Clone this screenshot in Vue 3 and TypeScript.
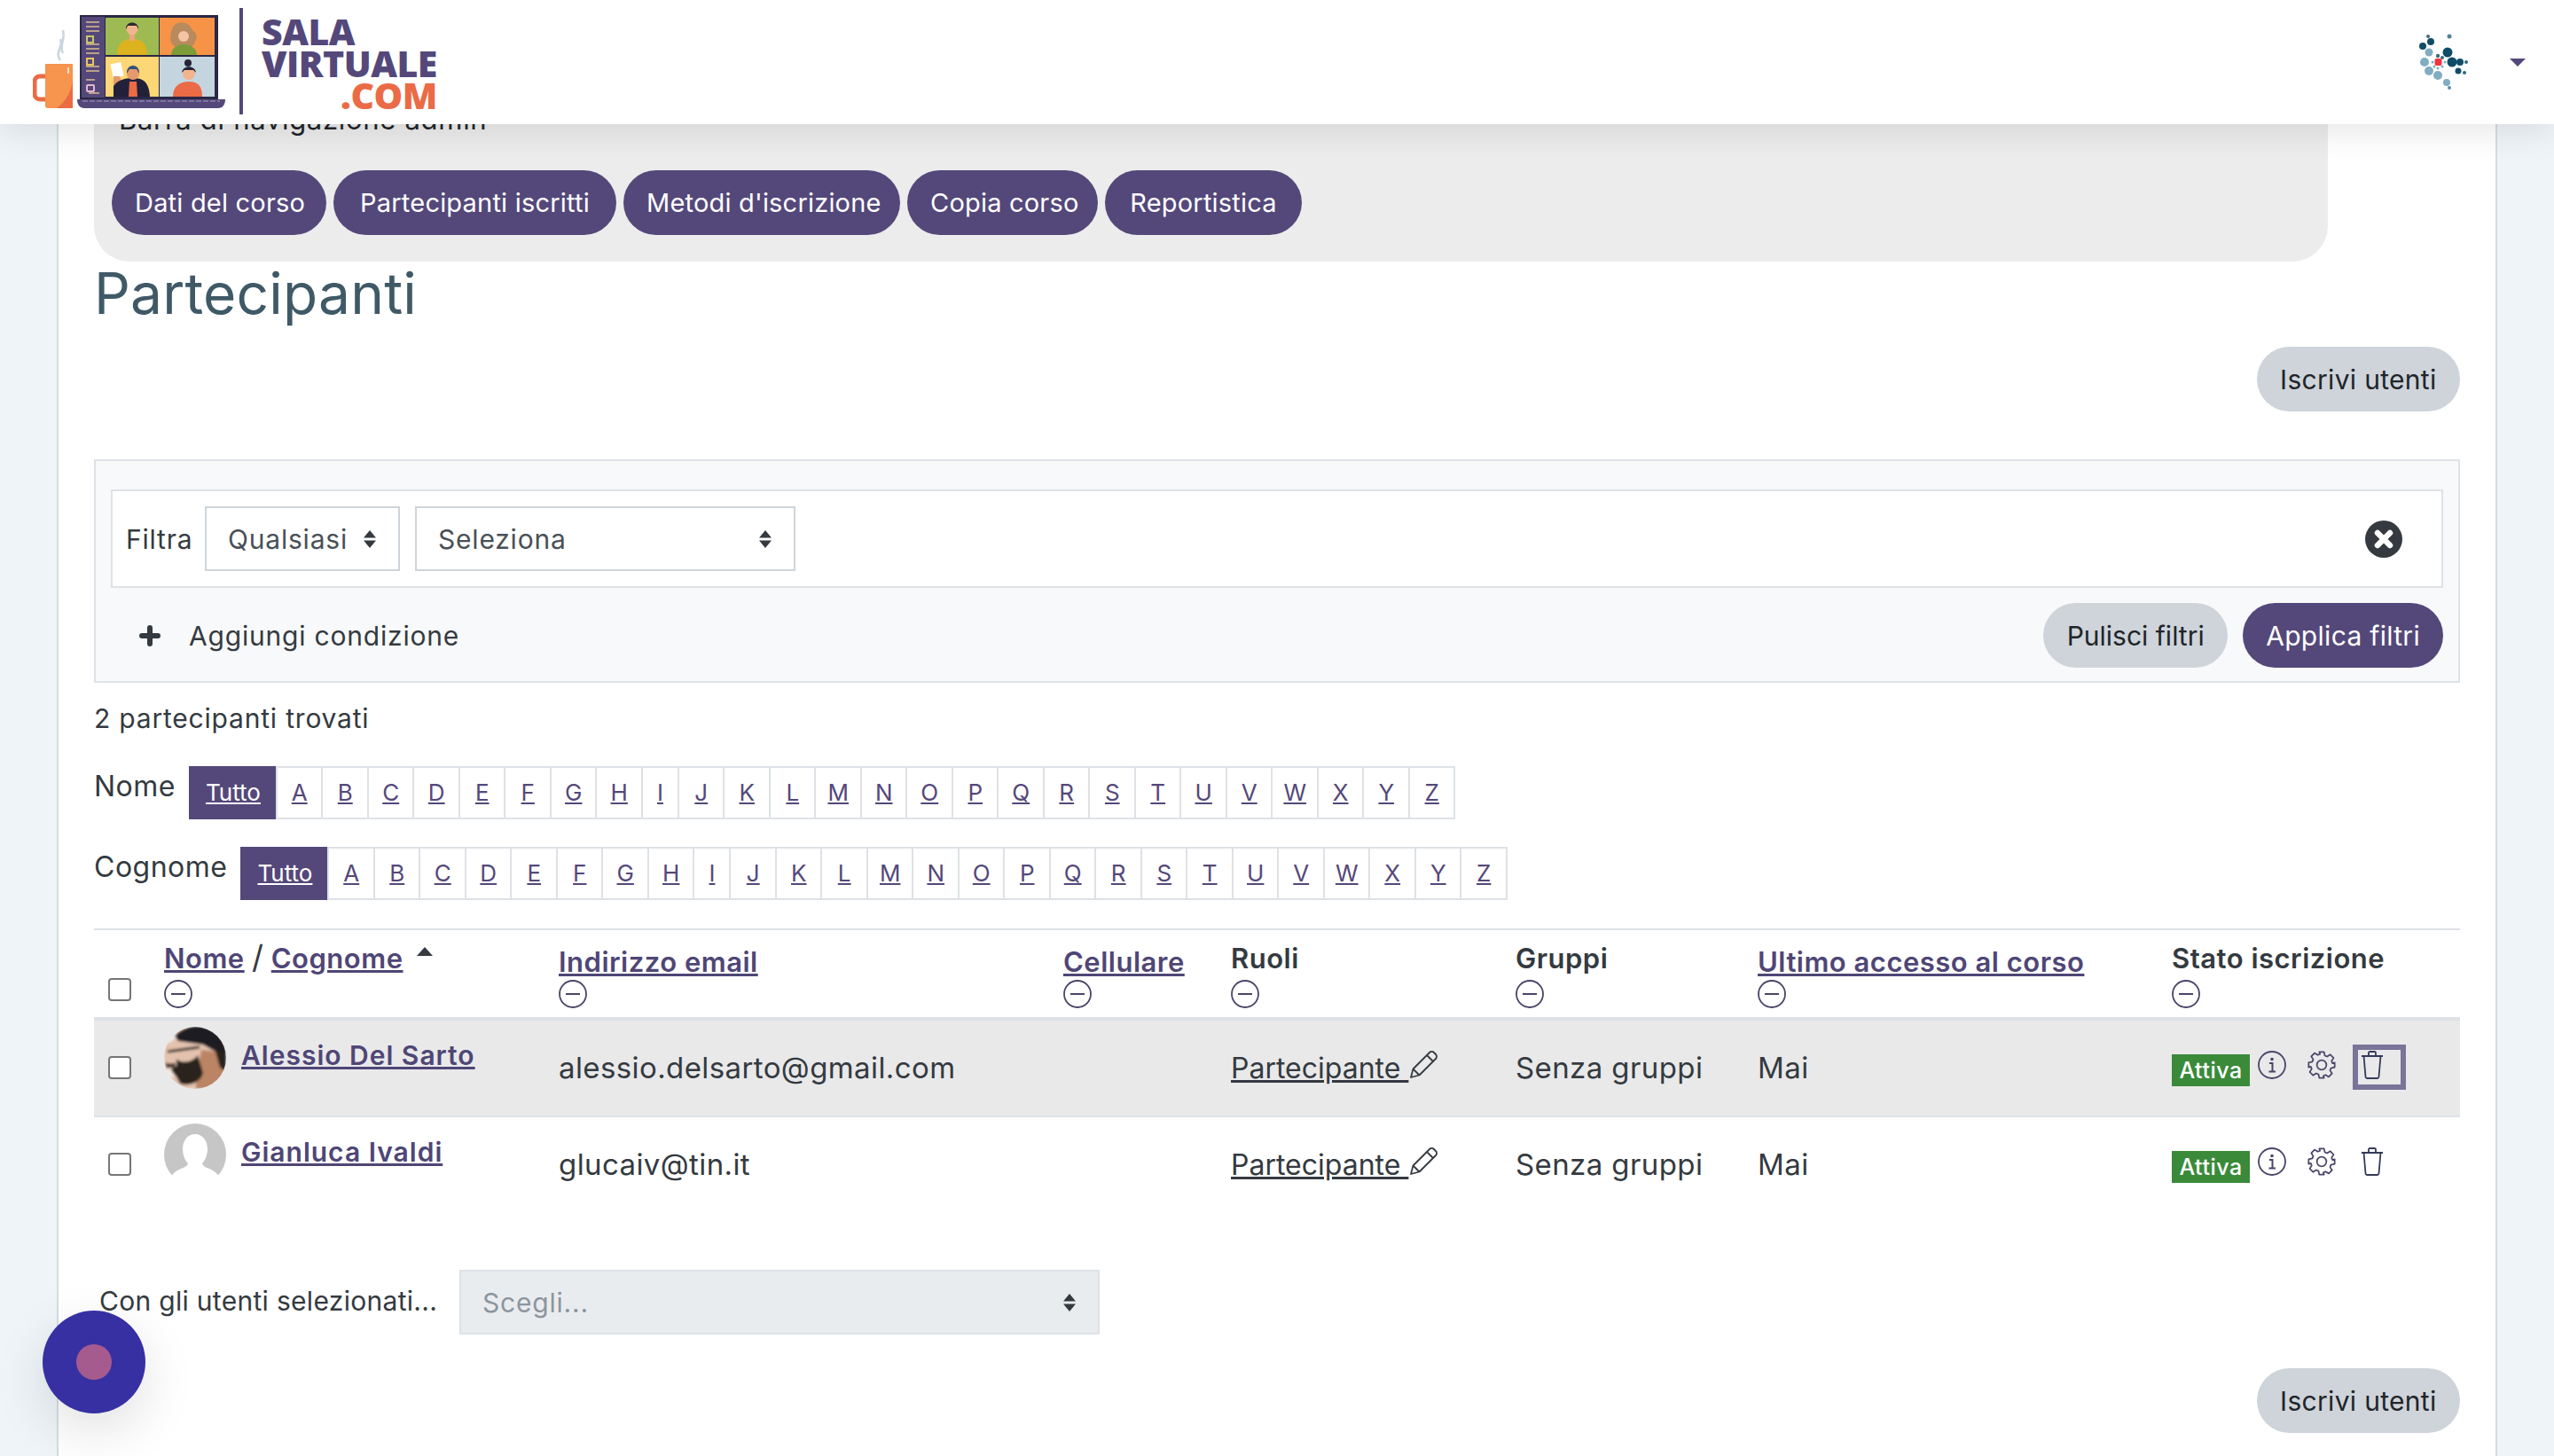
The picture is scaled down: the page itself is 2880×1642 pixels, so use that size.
<template>
  <div class="page">
    <header class="topbar">
      <div class="logo">
        <svg class="logo-art" width="225" height="122" viewBox="37 9 225 122">
          <!-- tazza -->
          <path d="M68 68c-7-9 4-15 0-24M71 60c-5-8 3-15 0-26" fill="none" stroke="#c9d6dd" stroke-width="2.500" />
          <rect x="39" y="86" width="18" height="26" rx="6" fill="none" stroke="#ea6b45" stroke-width="5" />
          <path d="M51 72h31v50H54a3 3 0 0 1-3-3z" fill="#f7944d" />
          <path d="M64 122c11-8 18-20 18-36v36z" fill="#ea6b45" />
          <rect x="76" y="76" width="2" height="7" fill="#fde2c4" />
          <!-- portatile -->
          <rect x="90" y="17" width="156" height="95" fill="#2a2745" />
          <rect x="92" y="19" width="26" height="91" fill="#54487a" />
          <path d="M97 25h15M97 30h15M97 35h15M97 50h15M97 55h15M97 60h15M97 75h15M97 80h15M97 90h10M100 105h12" stroke="#b9a08a" stroke-width="2" />
          <rect x="98" y="41" width="7" height="7" fill="none" stroke="#c8c66a" stroke-width="2" />
          <rect x="98" y="66" width="7" height="7" fill="none" stroke="#e8c65c" stroke-width="2" />
          <rect x="98" y="96" width="8" height="7" rx="1" fill="none" stroke="#e4b6d0" stroke-width="2" />
          <rect x="119" y="20" width="60" height="42" fill="#9dbb52" />
          <rect x="180" y="20" width="62" height="42" fill="#f79347" />
          <rect x="119" y="64" width="60" height="45" fill="#fdd675" />
          <rect x="180" y="64" width="62" height="45" fill="#c4d5e0" />
          <path d="M132 62c0-13 6-18 17-18s17 5 17 18z" fill="#dcb21e" />
          <rect x="146" y="38" width="6" height="8" fill="#eea57e" />
          <circle cx="149" cy="33" r="6.500" fill="#f2b48c" />
          <path d="M142 33c-1-10 15-10 14 0l-2-4h-10z" fill="#2e2a30" />
          <path d="M193 36c2-14 20-14 24-2 4 3 7 8 3 12-1 6-5 8-8 7h-12c-5 0-10-6-7-17z" fill="#b88a5e" />
          <path d="M193 62c0-8 7-12 14-12s15 4 15 12z" fill="#7c9c3a" />
          <circle cx="207" cy="41" r="6" fill="#f6c4a4" />
          <rect x="126" y="71" width="12" height="16" fill="#fff" transform="rotate(-12 132 79)" />
          <path d="M128 86h7l3 10h-10z" fill="#e59a6b" />
          <path d="M128 109v-12c4-6 12-9 22-9s18 3 19 21z" fill="#23213a" />
          <path d="M146 92h8l1 17h-10z" fill="#ea6b45" />
          <circle cx="150" cy="83" r="7" fill="#e59a6b" />
          <path d="M143 83c-1-12 15-12 14 0l-3-5h-8z" fill="#35507a" />
          <path d="M195 109c0-12 8-17 18-17s15 5 15 17z" fill="#ea6b45" />
          <circle cx="213" cy="83" r="7" fill="#f2b48c" />
          <circle cx="212" cy="71" r="4" fill="#262338" />
          <path d="M205 82c1-9 15-9 16 0l-3-3h-10z" fill="#262338" />
          <path d="M87 112h167c0 6-3 10-8 10H95c-5 0-8-4-8-10z" fill="#54487a" />
          <path d="M93 114h155" stroke="#8a80a8" stroke-width="1.500" stroke-dasharray="6 2" />
        </svg>
        <div class="logo-divider"></div>
        <div class="logo-text">
          <span class="logo-sala">SALA</span>
          <span class="logo-virtuale">VIRTUALE</span>
          <span class="logo-com">.COM</span>
        </div>
      </div>
      <div class="user-menu">
        <svg width="62" height="68" viewBox="2725 38 62 68">
          <g fill="#0f4c68">
            <circle cx="2738" cy="43" r="2" fill="#3f6a80" /><circle cx="2762" cy="43" r="2.500" fill="#557f93" />
            <circle cx="2741" cy="49" r="4" /><circle cx="2732" cy="54" r="4" /><circle cx="2760" cy="61" r="5.500" />
            <circle cx="2765" cy="72" r="5.500" /><circle cx="2774" cy="72" r="4" /><circle cx="2781" cy="72" r="2" fill="#2b6a80" />
            <circle cx="2772" cy="82" r="3.500" /><circle cx="2779" cy="84" r="2" fill="#2b6a80" />
            <circle cx="2749" cy="65" r="2.200" fill="#3f6a80" /><circle cx="2754" cy="67" r="2" fill="#3f6a80" />
          </g>
          <g fill="#81adc2">
            <circle cx="2739" cy="61" r="4.500" /><circle cx="2734" cy="72" r="5" /><circle cx="2739" cy="82" r="5" />
            <circle cx="2749" cy="87" r="5" /><circle cx="2759" cy="95" r="4" /><circle cx="2762" cy="101" r="2" fill="#5f8ea3" />
            <circle cx="2743" cy="72" r="1.500" /><circle cx="2745" cy="77" r="1.500" /><circle cx="2749" cy="79" r="1.500" /><circle cx="2754" cy="77" r="1.500" /><circle cx="2757" cy="72" r="1.500" />
          </g>
          <rect x="2745.500" y="68" width="8" height="8" rx="2" fill="#f0343f" />
        </svg>
        <span class="caret"></span>
      </div>
    </header>

    <main class="card">
      <section class="secondary-nav">
        <div class="nav-title">Barra di navigazione admin</div>
        <div class="nav-buttons">
          <button
            v-for="item in navItems"
            :key="item.label"
            class="btn btn-primary"
            :style="{ width: item.width + 'px' }"
          >{{ item.label }}</button>
        </div>
      </section>

      <h2 class="page-title">Partecipanti</h2>

      <div class="enrol-row">
        <button class="btn btn-secondary">Iscrivi utenti</button>
      </div>

      <section class="filters">
        <div class="filter-line">
          <span class="filter-label">Filtra</span>
          <div class="fake-select sel-any">Qualsiasi <SelectArrows /></div>
          <div class="fake-select sel-field">Seleziona <SelectArrows /></div>
          <svg class="filter-remove" width="42" height="42" viewBox="0 0 42 42">
            <circle cx="21" cy="21" r="21" fill="#343a40" />
            <path d="M14 14l14 14M28 14L14 28" stroke="#fff" stroke-width="6.500" stroke-linecap="round" />
          </svg>
        </div>
        <div class="filter-actions">
          <svg class="plus" width="24" height="24" viewBox="0 0 24 24">
            <path d="M12 3v18M3 12h18" stroke="#343a40" stroke-width="6" stroke-linecap="round" />
          </svg>
          <span class="add-cond">Aggiungi condizione</span>
          <button class="btn btn-secondary btn-clear">Pulisci filtri</button>
          <button class="btn btn-primary btn-apply">Applica filtri</button>
        </div>
      </section>

      <div class="found">2 partecipanti trovati</div>

      <div v-for="bar in letterBars" :key="bar" class="initials">
        <span class="initials-label">{{ bar }}</span>
        <div class="pagination">
          <a class="page-cell active">Tutto</a>
          <a v-for="l in letters" :key="l" class="page-cell" :class="{ narrow: l === 'I' }">{{ l }}</a>
        </div>
      </div>

      <table class="participants">
        <thead>
          <tr>
            <th class="col-check"><span class="checkbox head-check"></span></th>
            <th class="col-name">
              <a class="sort">Nome</a> <span class="slash">/</span> <a class="sort">Cognome</a>
              <span class="sort-arrow"></span>
              <MinusIcon />
            </th>
            <th class="col-mail"><a class="sort low">Indirizzo email</a><MinusIcon /></th>
            <th class="col-phone"><a class="sort low">Cellulare</a><MinusIcon /></th>
            <th class="col-role"><span class="plain">Ruoli</span><MinusIcon /></th>
            <th class="col-group"><span class="plain">Gruppi</span><MinusIcon /></th>
            <th class="col-last"><a class="sort low">Ultimo accesso al corso</a><MinusIcon /></th>
            <th class="col-state"><span class="plain">Stato iscrizione</span><MinusIcon /></th>
          </tr>
        </thead>
        <tbody>
          <tr v-for="(u, i) in users" :key="u.email" :class="{ hovered: i === 0 }">
            <td class="col-check"><span class="checkbox"></span></td>
            <td class="col-name">
              <div class="user-cell">
                <svg v-if="i === 0" class="avatar" width="70" height="70" viewBox="0 0 70 70">
                  <defs>
                    <clipPath id="av1"><circle cx="35" cy="35" r="35" /></clipPath>
                    <filter id="blur1"><feGaussianBlur stdDeviation="1.400" /></filter>
                  </defs>
                  <g clip-path="url(#av1)" filter="url(#blur1)">
                    <rect width="70" height="70" fill="#e3c2ad" />
                    <path d="M0 0h14v12L6 18H0z" fill="#eee" />
                    <path d="M36 60l6-34 16 2 12 20v22H36z" fill="#bb8465" />
                    <path d="M12 10C26-6 62-6 70 24v24l-8-6-4-14-14-8-28-4z" fill="#1f1d24" />
                    <path d="M58 26l12 4v20l-7-4z" fill="#26211f" />
                    <path d="M14 36c6 6 18 4 24-4l6 20c-2 10-16 16-26 12-4-8-6-12-12-15l8-5z" fill="#2c211c" />
                    <path d="M4 28l14-2 22-3" fill="none" stroke="#262223" stroke-width="3" />
                    <path d="M2 40c3 2 8 2 11 0l-1 6H2z" fill="#3a2a26" />
                    <path d="M0 48h8l4 10-8-3z" fill="#f3ece6" />
                  </g>
                </svg>
                <svg v-else class="avatar" width="70" height="70" viewBox="0 0 70 70">
                  <circle cx="35" cy="35" r="35" fill="#c6c6c6" />
                  <path d="M35 12c9 0 14 8 14 17 0 7-3 13-6 16 1 3 3 4 8 6 5 2 9 5 11 9a35 35 0 0 1-54 0c2-4 6-7 11-9 5-2 7-3 8-6-3-3-6-9-6-16 0-9 5-17 14-17z" fill="#fff" />
                </svg>
                <a class="user-name">{{ u.name }}</a>
              </div>
            </td>
            <td class="col-mail cell-mid">{{ u.email }}</td>
            <td class="col-phone cell-mid"></td>
            <td class="col-role cell-mid">
              <a class="role-link">Partecipante </a><svg class="pencil" width="32" height="32" viewBox="0 0 32 32">
                <path d="M2 30l2.500-9.500L23 2a3.500 3.500 0 0 1 5 0l2 2a3.500 3.500 0 0 1 0 5L11.500 27.500zM4.500 20.500l7 7M20 5l7 7" fill="none" stroke="#343a40" stroke-width="1.800" stroke-linejoin="round" />
              </svg>
            </td>
            <td class="col-group cell-mid">Senza gruppi</td>
            <td class="col-last cell-mid">Mai</td>
            <td class="col-state">
              <div class="state-cell">
                <span class="badge">Attiva</span>
                <svg class="state-icon" width="32" height="32" viewBox="0 0 32 32">
                  <circle cx="16" cy="16" r="15" fill="none" stroke="#4a4468" stroke-width="1.800" />
                  <circle cx="16" cy="9.500" r="1.800" fill="#4a4468" />
                  <path d="M13 14h3.500v9M12.500 23.500h7.500" fill="none" stroke="#4a4468" stroke-width="2" />
                </svg>
                <svg class="state-icon gear" width="32" height="32" viewBox="0 0 24 24">
                  <path d="M10 1h4l.7 3.100 1.900.8 2.700-1.700 2.800 2.800-1.700 2.700.8 1.900L23 10v4l-3.100.7-.8 1.900 1.700 2.700-2.800 2.800-2.700-1.700-1.900.8L14 23h-4l-.7-3.100-1.900-.8-2.700 1.700-2.800-2.800 1.700-2.700-.8-1.900L1 14v-4l3.100-.7.8-1.900-1.700-2.700 2.800-2.800 2.700 1.700 1.900-.8z" fill="none" stroke="#4a4468" stroke-width="1.300" stroke-linejoin="round" />
                  <circle cx="12" cy="12" r="4" fill="none" stroke="#4a4468" stroke-width="1.300" />
                </svg>
                <span class="trash-wrap" :class="{ focused: i === 0 }">
                  <svg width="26" height="32" viewBox="0 0 26 32">
                    <path d="M1 6h24M3.500 6l2 23c.1 1.300 1 2 2 2h11c1 0 1.900-.7 2-2l2-23M9 6V2.500c0-1 .6-1.500 1.500-1.500h5c.9 0 1.500.5 1.500 1.500V6" fill="none" stroke="#343a58" stroke-width="1.800" stroke-linejoin="round" />
                  </svg>
                </span>
              </div>
            </td>
          </tr>
        </tbody>
      </table>

      <div class="bulk">
        <span class="bulk-label">Con gli utenti selezionati...</span>
        <div class="fake-select sel-bulk">Scegli... <SelectArrows /></div>
      </div>

      <div class="enrol-row enrol-bottom">
        <button class="btn btn-secondary">Iscrivi utenti</button>
      </div>
    </main>

    <div class="chat-bubble"><span class="chat-dot"></span></div>
  </div>
</template>

<script setup lang="ts">
import { h } from 'vue'

const navItems = [
  { label: 'Dati del corso', width: 242 },
  { label: 'Partecipanti iscritti', width: 319 },
  { label: "Metodi d'iscrizione", width: 312 },
  { label: 'Copia corso', width: 215 },
  { label: 'Reportistica', width: 222 },
]
const letterBars = ['Nome', 'Cognome']
const letters = 'ABCDEFGHIJKLMNOPQRSTUVWXYZ'.split('')

const users = [
  { name: 'Alessio Del Sarto', email: 'alessio.delsarto@gmail.com' },
  { name: 'Gianluca Ivaldi', email: 'glucaiv@tin.it' },
]

// piccole icone riusate nel template
const SelectArrows = () =>
  h('svg', { class: 'arrows', width: 16, height: 20, viewBox: '0 0 16 20' }, [
    h('path', { d: 'M8 0l7 8.500H1zM8 20l-7-8.500h14z', fill: '#343a40' }),
  ])

const MinusIcon = () =>
  h('svg', { class: 'minus', width: 32, height: 32, viewBox: '0 0 32 32' }, [
    h('circle', { cx: 16, cy: 16, r: 15, fill: 'none', stroke: '#4a4468', 'stroke-width': 1.8 }),
    h('path', { d: 'M8 16h16', stroke: '#4a4468', 'stroke-width': 2 }),
  ])
</script>

<style>
html,
body {
  margin: 0;
  background: #eff4f8;
}
</style>

<style scoped>
.page {
  position: relative;
  height: 1642px;
  overflow: hidden;
  font-family: Inter, "Liberation Sans", sans-serif;
  font-size: 30px;
  letter-spacing: 0.8px;
  color: #343a40;
  background: #eff4f8;
}

.topbar {
  position: absolute;
  top: 0;
  left: 0;
  right: 0;
  z-index: 10;
  height: 140px;
  display: flex;
  align-items: center;
  justify-content: space-between;
  background: #fff;
  box-shadow: 0 4px 40px rgba(0, 0, 0, 0.12);
}

.logo {
  display: flex;
  align-items: flex-start;
  height: 140px;
  padding-left: 37px;
}
.logo-art {
  margin-top: 9px;
  flex-shrink: 0;
}
.logo-divider {
  width: 4px;
  height: 120px;
  margin: 9px 0 0 8px;
  background: #54487a;
}
.logo-text {
  display: flex;
  flex-direction: column;
  margin: 17px 0 0 21px;
  font-family: "Open Sans", sans-serif;
  font-weight: 800;
  font-size: 41px;
  line-height: 36px;
  letter-spacing: -0.5px;
  color: #54487a;
}
.logo-com {
  color: #ea6b45;
  text-align: right;
}

.user-menu {
  display: flex;
  align-items: center;
  gap: 43px;
  padding-right: 32px;
}
.caret {
  width: 0;
  height: 0;
  border-left: 9px solid transparent;
  border-right: 9px solid transparent;
  border-top: 9px solid #54487a;
}

.card {
  box-sizing: border-box;
  width: 2752px;
  height: 1642px;
  margin-left: 64px;
  padding: 103px 40px 0;
  background: #fff;
  border-left: 2px solid #d5dce2;
  border-right: 2px solid #d5dce2;
}

.secondary-nav {
  box-sizing: border-box;
  width: 2519px;
  height: 192px;
  padding: 14px 20px 0;
  background: #ececec;
  border-radius: 0 0 40px 40px;
}
.nav-title {
  padding-left: 8px;
  font-size: 31px;
  letter-spacing: 0.7px;
  line-height: 36px;
  color: #212529;
}
.nav-buttons {
  display: flex;
  gap: 8px;
  margin-top: 39px;
}

.btn {
  height: 73px;
  padding: 0 26px;
  border: 0;
  border-radius: 37px;
  font: inherit;
  white-space: nowrap;
}
.btn-primary {
  background: #54487a;
  color: #fff;
  font-size: 29px;
  letter-spacing: 0.2px;
}
.btn-secondary {
  padding: 0 26.500px;
  background: #ced4da;
  color: #212529;
  letter-spacing: 0.3px;
}
.btn-apply {
  font-size: 30px;
  letter-spacing: 0.3px;
}

.page-title {
  margin: 0;
  height: 96px;
  font-weight: 400;
  font-size: 64px;
  letter-spacing: 0.2px;
  line-height: 72px;
  color: #3f5a66;
}

.enrol-row {
  display: flex;
  justify-content: flex-end;
}
.enrol-bottom {
  margin-top: 38px;
}

.filters {
  box-sizing: border-box;
  height: 252px;
  margin-top: 54px;
  padding: 32px 17px 0;
  background: #f8f9fa;
  border: 2px solid #dee2e6;
}
.filter-line {
  box-sizing: border-box;
  display: flex;
  align-items: center;
  height: 111px;
  padding: 0 44px 0 15px;
  background: #fff;
  border: 2px solid #dee2e6;
}
.filter-label {
  width: 89px;
}
.fake-select {
  box-sizing: border-box;
  display: flex;
  align-items: center;
  justify-content: space-between;
  height: 73px;
  padding: 0 24px;
  background: #fff;
  border: 2px solid #ced4da;
  color: #495057;
}
.sel-any {
  width: 220px;
  margin-right: 17px;
}
.sel-field {
  width: 429px;
}
.sel-bulk {
  width: 722px;
  background: #e9ecef;
  border-color: #dee2e6;
  color: #8c959d;
}
.arrows {
  flex-shrink: 0;
}
.filter-remove {
  margin-left: auto;
}
.filter-actions {
  display: flex;
  align-items: center;
  margin-top: 17px;
  padding-left: 32px;
}
.add-cond {
  margin: 0 auto 0 32px;
}
.btn-clear {
  margin-right: 17px;
  letter-spacing: 0;
}

.found {
  margin-top: 20px;
  line-height: 40px;
}

.initials {
  display: flex;
  align-items: flex-start;
}
.initials-label {
  margin-right: 15px;
  font-size: 32px;
  letter-spacing: 0.5px;
  line-height: 46px;
}
.found + .initials {
  margin-top: 34px;
}
.initials + .initials {
  margin-top: 31px;
}
.pagination {
  display: flex;
  height: 60px;
  font-size: 26px;
  letter-spacing: 0;
}
.page-cell {
  box-sizing: border-box;
  display: flex;
  align-items: center;
  justify-content: center;
  width: 53.500px;
  margin-left: -2px;
  padding-bottom: 2px;
  background: #fff;
  border: 2px solid #dee2e6;
  color: #54487a;
  text-decoration: underline;
}
.page-cell.narrow {
  width: 43px;
}
.page-cell.active {
  width: 100px;
  margin-left: 0;
  background: #54487a;
  border-color: #54487a;
  color: #fff;
}

.participants {
  width: 2668px;
  margin-top: 32px;
  border-collapse: collapse;
  table-layout: fixed;
  border-top: 2px solid #dee2e6;
}
.participants th {
  position: relative;
  height: 98px;
  padding: 0;
  font-size: 31px;
  font-weight: 600;
  letter-spacing: 0.5px;
  text-align: left;
  vertical-align: top;
  border-bottom: 4px solid #dee2e6;
}
.participants td {
  box-sizing: border-box;
  height: 110px;
  padding: 0;
  font-size: 33px;
  letter-spacing: 0.4px;
  border-bottom: 2px solid #dee2e6;
  vertical-align: top;
}
.participants tr:last-child td {
  border-bottom: 0;
}
.hovered td {
  background: #e9e9ea;
}
.col-check {
  width: 79px;
}
.col-name {
  width: 445px;
}
.col-mail {
  width: 569px;
}
.col-phone {
  width: 189px;
}
.col-role {
  width: 321px;
}
.col-group {
  width: 273px;
}
.col-last {
  width: 467px;
}
.sort {
  color: #4f4676;
  text-decoration: underline;
}
.sort,
.plain {
  line-height: 40px;
}
th .sort {
  display: inline-block;
  margin-top: 12px;
}
th .plain {
  display: block;
  margin-top: 12px;
}
th .sort.low {
  display: table;
  margin-top: 18px;
  line-height: 36px;
}
.slash {
  font-size: 36px;
  font-weight: 400;
}
.sort-arrow {
  position: absolute;
  top: 19px;
  left: 285px;
  width: 0;
  height: 0;
  border-left: 9px solid transparent;
  border-right: 9px solid transparent;
  border-bottom: 10px solid #343a40;
}
:deep(.minus) {
  display: block;
  position: absolute;
  top: 56px;
}
.checkbox {
  display: block;
  box-sizing: border-box;
  width: 26px;
  height: 26px;
  margin: 40px 0 0 16px;
  background: #fff;
  border: 2px solid #767676;
  border-radius: 4px;
}
.head-check {
  margin-top: 54px;
}
.user-cell {
  display: flex;
  align-items: flex-start;
  gap: 17px;
  padding-top: 7px;
}
.avatar {
  flex-shrink: 0;
}
.user-name {
  margin-top: 14px;
  font-size: 30px;
  font-weight: 600;
  letter-spacing: 1px;
  line-height: 36px;
  color: #4f4676;
  text-decoration: underline;
}
.cell-mid {
  padding-top: 31px !important;
  line-height: 44px;
}
.role-link {
  font-size: 32px;
  letter-spacing: 0;
  text-decoration: underline;
  white-space: pre;
}
.pencil {
  margin-left: 1px;
  vertical-align: -1px;
}
.state-cell {
  display: flex;
  align-items: flex-start;
  padding-top: 27px;
}
.badge {
  box-sizing: border-box;
  width: 88px;
  height: 36px;
  margin-top: 11px;
  background: #3a8a3a;
  color: #fff;
  font-size: 25px;
  font-weight: 500;
  letter-spacing: 0.5px;
  line-height: 36px;
  text-align: center;
}
.state-icon {
  margin: 7px 0 0 9px;
}
.gear {
  margin-left: 24px;
}
.trash-wrap {
  box-sizing: border-box;
  display: block;
  width: 60px;
  height: 51px;
  margin-left: 19px;
  padding: 1px 0 0 3px;
  border: 6px solid transparent;
}
.trash-wrap svg {
  display: block;
}
.trash-wrap.focused {
  border-color: #7a7499;
}

.bulk {
  display: flex;
  align-items: center;
  margin-top: 63px;
  padding-left: 6px;
}
.bulk-label {
  width: 406px;
  margin-top: -4px;
  letter-spacing: 0.3px;
  white-space: nowrap;
}

.chat-bubble {
  position: absolute;
  left: 48px;
  top: 1478px;
  z-index: 5;
  display: flex;
  align-items: center;
  justify-content: center;
  width: 116px;
  height: 116px;
  border-radius: 50%;
  background: #3730a3;
  box-shadow: 0 20px 60px rgba(0, 0, 0, 0.12);
}
.chat-dot {
  width: 40px;
  height: 40px;
  border-radius: 50%;
  background: #a65b8f;
}
</style>
